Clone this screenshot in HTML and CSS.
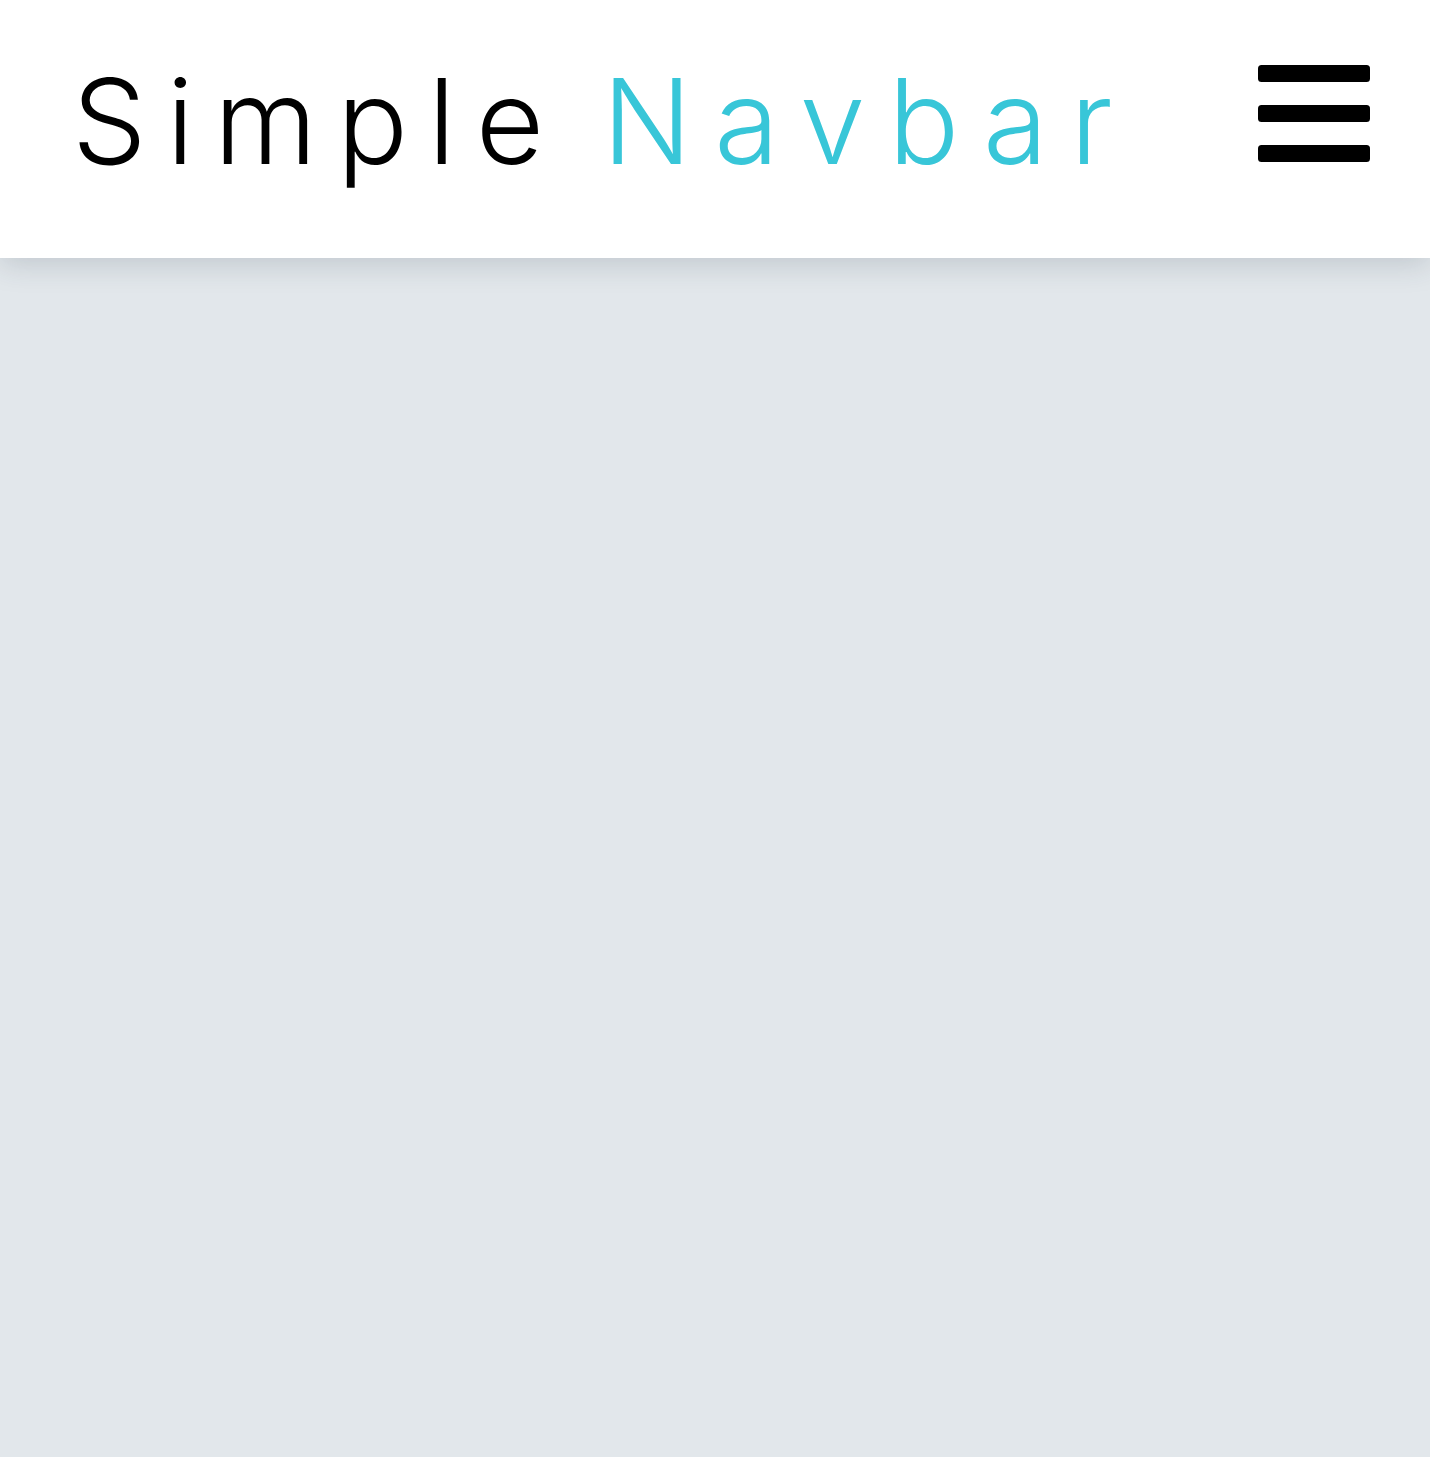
FILE: index.html
```html
<!DOCTYPE html>
<html lang="en">
<head>
<meta charset="utf-8">
<title>Simple Navbar</title>
<link rel="stylesheet" href="styles.css">
</head>
<body>
<header class="navbar">
  <h1 class="brand">Simple <span class="brand-accent">Navbar</span></h1>
  <button class="menu-toggle" aria-label="Menu">
    <svg class="menu-icon" width="112" height="97" viewBox="0 0 112 97">
      <rect x="0" y="0" width="112" height="17" rx="3.5"/>
      <rect x="0" y="40" width="112" height="17" rx="3.5"/>
      <rect x="0" y="80" width="112" height="17" rx="3.5"/>
    </svg>
  </button>
</header>
<main class="content"></main>
</body>
</html>
```
FILE: styles.css
```css
* { box-sizing: border-box; }
html, body { margin: 0; padding: 0; }
body {
  background: #e2e7eb;
  min-height: 1457px;
  font-family: Inter, "Noto Sans", sans-serif;
}
.navbar {
  height: 258px;
  background: #ffffff;
  display: flex;
  justify-content: space-between;
  align-items: flex-start;
  padding: 0 60px 0 72px;
  box-shadow: 0 6px 28px rgba(40, 55, 70, 0.18);
  position: relative;
}
.brand {
  margin: 0;
  margin-top: 51px;
  font-weight: 300;
  font-size: 118px;
  line-height: 140px;
  letter-spacing: 20px;
  word-spacing: -15px;
  color: #000;
  white-space: nowrap;
}
.brand-accent {
  color: #38c6d8;
  letter-spacing: 22.5px;
}
.menu-toggle {
  margin-top: 65px;
  padding: 0;
  border: 0;
  background: none;
  cursor: pointer;
  line-height: 0;
}
.menu-icon { display: block; fill: #000; }
.content { min-height: 1199px; }
```
